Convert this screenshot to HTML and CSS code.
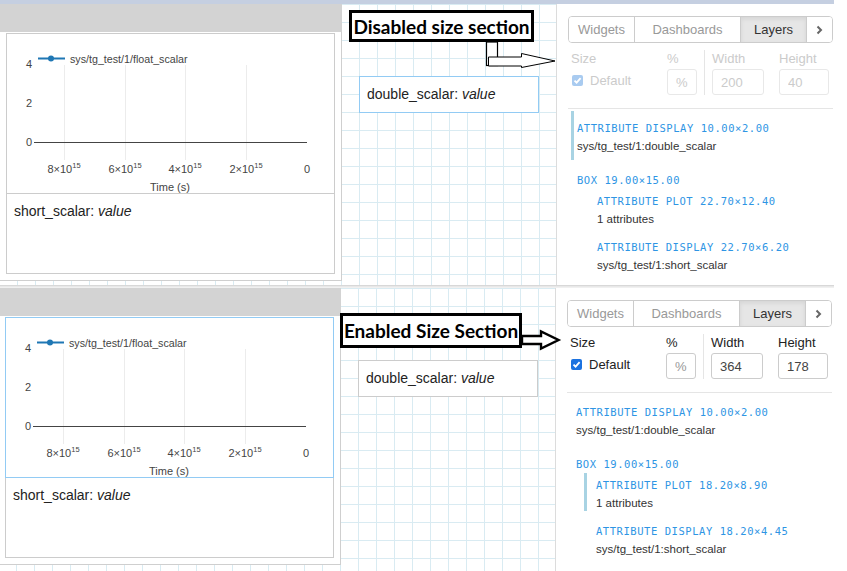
FILE: index.html
```html
<!DOCTYPE html>
<html lang="en">
  <head>
    <meta charset="UTF-8" />
    <meta name="viewport" content="width=device-width, initial-scale=1.0" />
    <title>Layers - size section</title>
    <link rel="stylesheet" href="styles.css">
  </head>
  <body>
    <!-- foerste billede: size sektion er slaaet fra -->
    <section class="shot shot_top">
      <div class="topbar"></div>
      <div class="app">
        <div class="canvas">
          <div class="frame">
            <div class="frame_head"></div>
            <div class="frame_body">
              <div class="plot">
                <svg width="327" height="159" viewBox="0 0 327 159">
                  <g stroke="#ececec" stroke-width="1">
                    <line x1="57.5" y1="31" x2="57.5" y2="126" />
                    <line x1="118.5" y1="31" x2="118.5" y2="126" />
                    <line x1="178.5" y1="31" x2="178.5" y2="126" />
                    <line x1="239.5" y1="31" x2="239.5" y2="126" />
                  </g>
                  <line x1="27" y1="108.5" x2="300" y2="108.5" stroke="#444" />
                  <line x1="31" y1="24.5" x2="58" y2="24.5" stroke="#1f77b4" stroke-width="2" />
                  <circle cx="44" cy="24.5" r="3" fill="#1f77b4" />
                  <g class="axis">
                    <text x="63" y="28.5" class="legend">sys/tg_test/1/float_scalar</text>
                    <text x="25" y="34" text-anchor="end">4</text>
                    <text x="25" y="73" text-anchor="end">2</text>
                    <text x="25" y="112" text-anchor="end">0</text>
                    <text x="57" y="139" text-anchor="middle">8×10<tspan dy="-5" class="sup">15</tspan></text>
                    <text x="118" y="139" text-anchor="middle">6×10<tspan dy="-5" class="sup">15</tspan></text>
                    <text x="178" y="139" text-anchor="middle">4×10<tspan dy="-5" class="sup">15</tspan></text>
                    <text x="239" y="139" text-anchor="middle">2×10<tspan dy="-5" class="sup">15</tspan></text>
                    <text x="300" y="139" text-anchor="middle">0</text>
                    <text x="163" y="157" text-anchor="middle">Time (s)</text>
                  </g>
                </svg>
              </div>
              <div class="display">short_scalar: <em>value</em></div>
            </div>
          </div>
          <div class="display display_float aktiv">double_scalar: <em>value</em></div>
        </div>

        <aside class="panel disabled">
          <nav class="tabs">
            <button>Widgets</button>
            <button>Dashboards</button>
            <button class="valgt">Layers</button>
            <button class="more">
              <svg width="7" height="10" viewBox="0 0 7 10"><path d="M1.5 1.5 L5 5 L1.5 8.5" fill="none" stroke="#666" stroke-width="2" /></svg>
            </button>
          </nav>
          <div class="size">
            <div class="col col_size">
              <label>Size</label>
              <div class="check">
                <span class="box"><svg width="9" height="9" viewBox="0 0 9 9"><path d="M1.5 4.6 L3.6 6.7 L7.6 2.2" fill="none" stroke="#fff" stroke-width="1.8" /></svg></span>
                Default
              </div>
            </div>
            <div class="col col_pct">
              <label>%</label>
              <input type="text" placeholder="%" disabled />
            </div>
            <div class="sep"></div>
            <div class="col col_w">
              <label>Width</label>
              <input type="text" value="200" disabled />
            </div>
            <div class="col col_h">
              <label>Height</label>
              <input type="text" value="40" disabled />
            </div>
          </div>
          <ul class="layers">
            <li class="layer valgt">
              <div class="kind">ATTRIBUTE DISPLAY 10.00×2.00</div>
              <div class="name">sys/tg_test/1:double_scalar</div>
            </li>
            <li class="layer">
              <div class="kind">BOX 19.00×15.00</div>
              <ul class="layers nested">
                <li class="layer">
                  <div class="kind">ATTRIBUTE PLOT 22.70×12.40</div>
                  <div class="name">1 attributes</div>
                </li>
                <li class="layer">
                  <div class="kind">ATTRIBUTE DISPLAY 22.70×6.20</div>
                  <div class="name">sys/tg_test/1:short_scalar</div>
                </li>
              </ul>
            </li>
          </ul>
        </aside>
      </div>

      <div class="callout callout_top">Disabled size section</div>
      <svg class="arrows" width="847" height="285" viewBox="0 0 847 285">
        <rect x="486.5" y="42" width="11" height="23.5" fill="none" stroke="#000" stroke-width="1.2" />
        <polygon points="488.5,57 521.5,57 521.5,53.5 555,61 521.5,67.5 521.5,66 488.5,66" fill="#fff" stroke="#000" stroke-width="1" />
      </svg>
    </section>

    <div class="split"></div>

    <!-- andet billede: size sektion er slaaet til -->
    <section class="shot shot_bottom">
      <div class="shade"></div>
      <div class="app">
        <div class="canvas">
          <div class="frame">
            <div class="frame_head"></div>
            <div class="frame_body">
              <div class="plot aktiv">
                <svg width="327" height="159" viewBox="0 0 327 159">
                  <g stroke="#ececec" stroke-width="1">
                    <line x1="57.5" y1="31" x2="57.5" y2="126" />
                    <line x1="118.5" y1="31" x2="118.5" y2="126" />
                    <line x1="178.5" y1="31" x2="178.5" y2="126" />
                    <line x1="239.5" y1="31" x2="239.5" y2="126" />
                  </g>
                  <line x1="27" y1="108.5" x2="300" y2="108.5" stroke="#444" />
                  <line x1="31" y1="24.5" x2="58" y2="24.5" stroke="#1f77b4" stroke-width="2" />
                  <circle cx="44" cy="24.5" r="3" fill="#1f77b4" />
                  <g class="axis">
                    <text x="63" y="28.5" class="legend">sys/tg_test/1/float_scalar</text>
                    <text x="25" y="34" text-anchor="end">4</text>
                    <text x="25" y="73" text-anchor="end">2</text>
                    <text x="25" y="112" text-anchor="end">0</text>
                    <text x="57" y="139" text-anchor="middle">8×10<tspan dy="-5" class="sup">15</tspan></text>
                    <text x="118" y="139" text-anchor="middle">6×10<tspan dy="-5" class="sup">15</tspan></text>
                    <text x="178" y="139" text-anchor="middle">4×10<tspan dy="-5" class="sup">15</tspan></text>
                    <text x="239" y="139" text-anchor="middle">2×10<tspan dy="-5" class="sup">15</tspan></text>
                    <text x="300" y="139" text-anchor="middle">0</text>
                    <text x="163" y="157" text-anchor="middle">Time (s)</text>
                  </g>
                </svg>
              </div>
              <div class="display">short_scalar: <em>value</em></div>
            </div>
          </div>
          <div class="display display_float">double_scalar: <em>value</em></div>
        </div>

        <aside class="panel">
          <nav class="tabs">
            <button>Widgets</button>
            <button>Dashboards</button>
            <button class="valgt">Layers</button>
            <button class="more">
              <svg width="7" height="10" viewBox="0 0 7 10"><path d="M1.5 1.5 L5 5 L1.5 8.5" fill="none" stroke="#666" stroke-width="2" /></svg>
            </button>
          </nav>
          <div class="size">
            <div class="col col_size">
              <label>Size</label>
              <div class="check">
                <span class="box"><svg width="9" height="9" viewBox="0 0 9 9"><path d="M1.5 4.6 L3.6 6.7 L7.6 2.2" fill="none" stroke="#fff" stroke-width="1.8" /></svg></span>
                Default
              </div>
            </div>
            <div class="col col_pct">
              <label>%</label>
              <input type="text" placeholder="%" />
            </div>
            <div class="sep"></div>
            <div class="col col_w">
              <label>Width</label>
              <input type="text" value="364" />
            </div>
            <div class="col col_h">
              <label>Height</label>
              <input type="text" value="178" />
            </div>
          </div>
          <ul class="layers">
            <li class="layer">
              <div class="kind">ATTRIBUTE DISPLAY 10.00×2.00</div>
              <div class="name">sys/tg_test/1:double_scalar</div>
            </li>
            <li class="layer">
              <div class="kind">BOX 19.00×15.00</div>
              <ul class="layers nested">
                <li class="layer valgt">
                  <div class="kind">ATTRIBUTE PLOT 18.20×8.90</div>
                  <div class="name">1 attributes</div>
                </li>
                <li class="layer">
                  <div class="kind">ATTRIBUTE DISPLAY 18.20×4.45</div>
                  <div class="name">sys/tg_test/1:short_scalar</div>
                </li>
              </ul>
            </li>
          </ul>
        </aside>
      </div>

      <div class="callout callout_bottom">Enabled Size Section</div>
      <svg class="arrows" width="847" height="285" viewBox="0 0 847 285">
        <polygon points="522,50 541,50 541,45.5 558.5,54 541,62.5 541,58 522,58" fill="#fff" stroke="#000" stroke-width="2.4" stroke-linejoin="miter" />
      </svg>
    </section>
  </body>
</html>
```

FILE: styles.css
```css
body {
  margin: 0;
  width: 847px;
  height: 571px;
  overflow: hidden;
  background-color: #fff;
  font-family: "Liberation Sans", Arial, sans-serif;
}

.shot {
  position: relative;
  width: 834px;
  height: 285px;
}

.topbar {
  height: 4px;
  background-color: #c5cfe1;
}

.shade {
  height: 2px;
  background: linear-gradient(#e4e4e4, #f4f4f4);
}

.split {
  width: 834px;
  height: 1px;
  background-color: #d8d8d8;
}

.app {
  display: flex;
  height: 281px;
}

.shot_bottom .app {
  height: 283px;
  margin-left: -1px;
}

/* canvas med gitter */
.canvas {
  position: relative;
  flex: none;
  width: 556px;
  overflow: hidden;
  background-color: #fff;
  background-image: linear-gradient(to right, #d9ebf2 1px, transparent 1px),
    linear-gradient(to bottom, #d9ebf2 1px, transparent 1px);
  background-size: 18px 18px;
  background-position: 17px 0;
}

.frame {
  position: absolute;
  left: 0;
  top: 0;
  width: 342px;
  height: 277px;
  box-sizing: border-box;
  background-color: #fff;
  border-right: 1px solid #cfcfcf;
  border-bottom: 1px solid #cfcfcf;
}

.frame_head {
  height: 28px;
  margin-right: -1px;
  background-color: #d3d3d3;
}

.frame_body {
  padding: 1px 0 0 6px;
}

.plot {
  width: 329px;
  height: 161px;
  box-sizing: border-box;
  border: 1px solid #ccc;
}

.plot svg {
  display: block;
}

.axis text {
  font-family: "Liberation Sans", Arial, sans-serif;
  font-size: 11px;
  fill: #444;
}

.axis .legend {
  font-size: 10.7px;
}

.axis .sup {
  font-size: 7.5px;
}

.display {
  font-size: 14px;
  color: #222;
}

.frame .display {
  width: 329px;
  height: 80px;
  box-sizing: border-box;
  border: 1px solid #ccc;
  border-top: none;
  padding: 9px 7px;
  line-height: 16px;
}

.display_float {
  position: absolute;
  left: 359px;
  top: 72px;
  width: 180px;
  height: 37px;
  box-sizing: border-box;
  border: 1px solid #ccc;
  background-color: #fff;
  padding: 0 7px;
  line-height: 35px;
}

.plot.aktiv,
.display_float.aktiv {
  border-color: #92cbf4;
}

/* panel til hoejre */
.panel {
  flex: none;
  width: 278px;
  box-sizing: border-box;
  border-left: 1px solid #dcdcdc;
  background-color: #fff;
  padding: 12px 1px 0 11px;
}

.tabs {
  display: flex;
  height: 27px;
  box-sizing: border-box;
  border: 1px solid #ccc;
  border-radius: 4px;
  overflow: hidden;
}

.tabs button {
  flex: none;
  box-sizing: border-box;
  width: 66px;
  padding: 0;
  border: none;
  border-right: 1px solid #ccc;
  background-color: #fff;
  font-family: "Liberation Sans", Arial, sans-serif;
  font-size: 13px;
  color: #999;
}

.tabs button:nth-child(2) {
  width: 106px;
}

.tabs .valgt {
  background-color: #e6e6e6;
  color: #333;
  box-shadow: inset 0 2px 4px rgba(0, 0, 0, 0.08);
}

.tabs .more {
  flex: 1;
  border-right: none;
  display: flex;
  align-items: center;
  justify-content: center;
}

.size {
  display: flex;
  margin-top: 7px;
  padding: 0 0 13px 3px;
  border-bottom: 1px solid #e5e5e5;
}

.col label {
  display: block;
  font-size: 13px;
  line-height: 18px;
  color: #222;
}

.col_size {
  width: 96px;
}

.col_pct {
  width: 30px;
}

.sep {
  width: 1px;
  margin: 0 7px;
  background-color: #e5e5e5;
}

.col_w {
  width: 52px;
  margin-right: 15px;
}

.col_h {
  width: 50px;
}

.col input {
  display: block;
  width: 100%;
  height: 26px;
  margin: 1px 0 0;
  box-sizing: border-box;
  border: 1px solid #ccc;
  border-radius: 3px;
  padding: 0 8px;
  font-family: "Liberation Sans", Arial, sans-serif;
  font-size: 13px;
  color: #444;
  background-color: #fff;
}

.col input::placeholder {
  color: #999;
}

.check {
  display: flex;
  align-items: center;
  height: 23px;
  margin-top: 1px;
  font-size: 13px;
  color: #222;
}

.check .box {
  display: flex;
  align-items: center;
  justify-content: center;
  width: 11px;
  height: 11px;
  margin: 0 7px 0 1px;
  border-radius: 2px;
  background-color: #1b72e0;
}

/* slaaet fra */
.disabled .col label,
.disabled .check {
  color: #cbcbcb;
}

.disabled .col input {
  border-color: #e8e8e8;
  color: #cbcbcb;
}

.disabled .col input::placeholder {
  color: #cbcbcb;
}

.disabled .check .box {
  background-color: #a9cbf0;
}

/* lag-liste */
.layers {
  list-style: none;
  margin: 0;
  padding: 2px 0 0 3px;
}

.layer {
  border-left: 3px solid transparent;
  padding: 10px 0 6px 3px;
}

.layer + .layer {
  margin-top: 3px;
}

.layer.valgt {
  border-left-color: #a8d3e3;
}

.kind {
  font-family: "DejaVu Sans Mono", monospace;
  font-size: 10.5px;
  letter-spacing: 0.55px;
  line-height: 14px;
  color: #2e95e4;
}

.name {
  margin-top: 3px;
  font-size: 11.5px;
  line-height: 16px;
  color: #333;
}

.nested {
  margin-left: 8px;
  padding: 2px 0 0 0;
}

.nested .layer {
  padding: 5px 0 0 9px;
}

.nested .layer + .layer {
  margin-top: 8px;
}

/* kommentarer oven paa billedet */
.callout {
  position: absolute;
  z-index: 2;
  box-sizing: border-box;
  display: flex;
  align-items: center;
  justify-content: center;
  border: 3px solid #000;
  background-color: #fff;
  font-family: Lato, "Open Sans", sans-serif;
  font-weight: bold;
  font-size: 19px;
  color: #000;
  white-space: nowrap;
}

.callout_top {
  left: 349px;
  top: 10px;
  width: 185px;
  height: 32px;
}

.callout_bottom {
  left: 340px;
  top: 27px;
  width: 182px;
  height: 35px;
}

.arrows {
  position: absolute;
  left: 0;
  top: 0;
  z-index: 3;
  pointer-events: none;
}
```
